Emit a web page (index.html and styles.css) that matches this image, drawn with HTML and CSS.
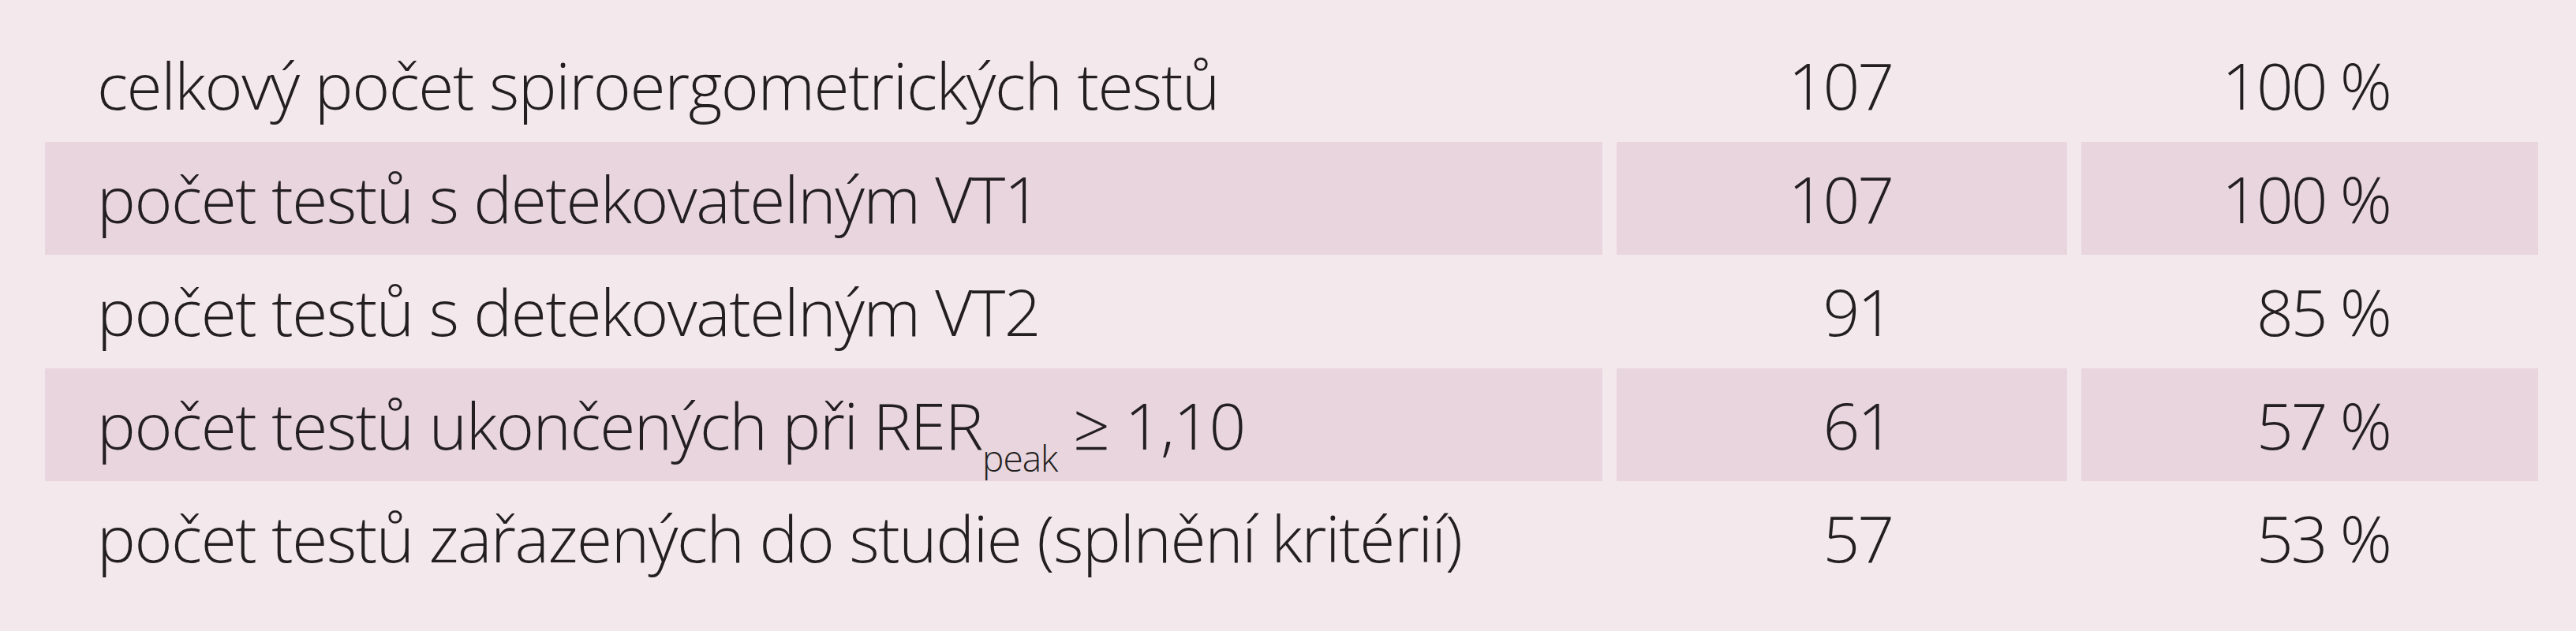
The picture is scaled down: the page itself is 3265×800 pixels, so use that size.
FILE: index.html
```html
<!DOCTYPE html>
<html lang="cs">
<head>
<meta charset="utf-8">
<title>Spiroergometrické testy</title>
<link rel="stylesheet" href="styles.css">
</head>
<body>
<div class="table">
  <div class="row">
    <div class="cell label">celkový počet spiroergometrických testů</div>
    <div class="cell num">107</div>
    <div class="cell pct">100 %</div>
  </div>
  <div class="row alt">
    <div class="cell label">počet testů s detekovatelným VT1</div>
    <div class="cell num">107</div>
    <div class="cell pct">100 %</div>
  </div>
  <div class="row">
    <div class="cell label">počet testů s detekovatelným VT2</div>
    <div class="cell num">91</div>
    <div class="cell pct">85 %</div>
  </div>
  <div class="row alt">
    <div class="cell label">počet testů ukončených při RER<span class="sub">peak</span> ≥ 1,10</div>
    <div class="cell num">61</div>
    <div class="cell pct">57 %</div>
  </div>
  <div class="row">
    <div class="cell label">počet testů zařazených do studie (splnění kritérií)</div>
    <div class="cell num">57</div>
    <div class="cell pct">53 %</div>
  </div>
</div>
</body>
</html>
```
FILE: styles.css
```css
html, body {
  margin: 0;
  padding: 0;
}
body {
  background: #f3e8ec;
  color: #231f20;
  font-family: "Open Sans", "Noto Sans", "Liberation Sans", sans-serif;
  font-weight: 300;
  width: 3265px;
  height: 800px;
  overflow: hidden;
}
.table {
  padding: 36px 0 0 57px;
}
.row {
  display: grid;
  grid-template-columns: 1974px 571px 579px;
  column-gap: 18px;
  height: 143.5px;
}
.row.alt .cell {
  background: #e8d5de;
}
.cell {
  font-size: 82px;
  line-height: 143.5px;
  white-space: nowrap;
  letter-spacing: -3px;
}
.label {
  padding-left: 66px;
  letter-spacing: -1.4px;
}
.num {
  text-align: right;
  padding-right: 222px;
}
.pct {
  text-align: right;
  padding-right: 188px;
}
.sub {
  font-size: 46px;
  line-height: 0;
  vertical-align: -28px;
  letter-spacing: -1px;
}
```
